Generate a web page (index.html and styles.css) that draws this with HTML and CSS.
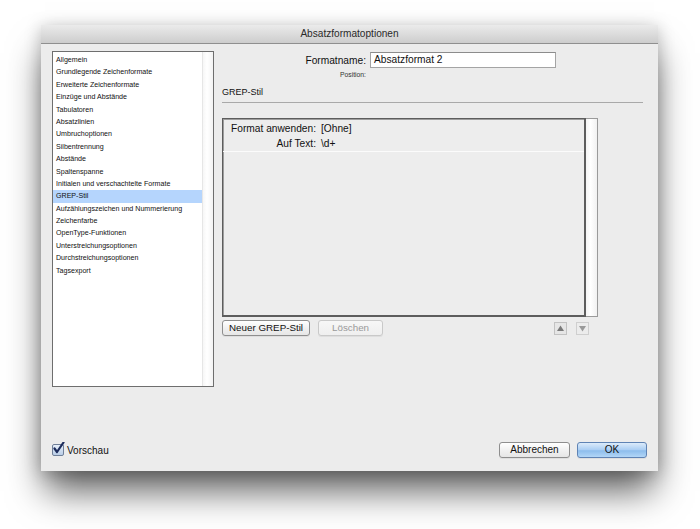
FILE: index.html
```html
<!DOCTYPE html>
<html lang="de">
<head>
<meta charset="utf-8">
<title>Absatzformatoptionen</title>
<link rel="stylesheet" href="styles.css">
</head>
<body>
<div class="window">
  <div class="titlebar">Absatzformatoptionen</div>
  <div class="content">
    <div class="main">
      <div class="listbox">
        <ul class="categories">
          <li>Allgemein</li>
          <li>Grundlegende Zeichenformate</li>
          <li>Erweiterte Zeichenformate</li>
          <li>Einzüge und Abstände</li>
          <li>Tabulatoren</li>
          <li>Absatzlinien</li>
          <li>Umbruchoptionen</li>
          <li>Silbentrennung</li>
          <li>Abstände</li>
          <li>Spaltenspanne</li>
          <li>Initialen und verschachtelte Formate</li>
          <li class="selected">GREP-Stil</li>
          <li>Aufzählungszeichen und Nummerierung</li>
          <li>Zeichenfarbe</li>
          <li>OpenType-Funktionen</li>
          <li>Unterstreichungsoptionen</li>
          <li>Durchstreichungsoptionen</li>
          <li>Tagsexport</li>
        </ul>
        <div class="list-scroll"></div>
      </div>

      <div class="panel">
        <div class="name-row">
          <label class="name-label">Formatname:</label>
          <div class="text-field">Absatzformat 2</div>
        </div>
        <div class="position-row">Position:</div>
        <div class="section-title">GREP-Stil</div>
        <div class="rule"></div>

        <div class="grep-box">
          <div class="grep-list">
            <div class="grep-item">
              <div class="grep-line"><span class="grep-key">Format anwenden:</span><span class="grep-val">[Ohne]</span></div>
              <div class="grep-line"><span class="grep-key">Auf Text:</span><span class="grep-val">\d+</span></div>
            </div>
          </div>
          <div class="grep-scroll"></div>
        </div>

        <div class="grep-actions">
          <button class="btn">Neuer GREP-Stil</button>
          <button class="btn disabled">Löschen</button>
          <div class="spacer"></div>
          <span class="arrow-btn up"><svg viewBox="0 0 11 11" width="11" height="11"><path d="M5.5 2.5 L9 8 L2 8 Z" fill="#7a7a7a"/></svg></span>
          <span class="arrow-btn down"><svg viewBox="0 0 11 11" width="11" height="11"><path d="M2 3 L9 3 L5.5 8.5 Z" fill="#9a9a9a"/></svg></span>
        </div>
      </div>
    </div>

    <div class="footer">
      <label class="check">
        <span class="checkbox"><svg viewBox="0 0 13 13" width="13" height="13"><path d="M2.5 6.5 L5 10 L11.5 0.5" fill="none" stroke="#1c2c5c" stroke-width="2.2" stroke-linecap="round" stroke-linejoin="round"/></svg></span>
        <span>Vorschau</span>
      </label>
      <div class="spacer"></div>
      <button class="btn dialog">Abbrechen</button>
      <button class="btn dialog default">OK</button>
    </div>
  </div>
</div>
</body>
</html>
```

FILE: styles.css
```css
html, body {
  margin: 0;
  padding: 0;
  background: #ffffff;
}

body {
  font-family: "Liberation Sans", Arial, sans-serif;
  font-size: 10.2px;
  color: #111;
  padding: 25px 0 0 41px;
  min-height: 529px;
  box-sizing: border-box;
  overflow: hidden;
}

.window {
  width: 617px;
  height: 446px;
  background: #ececec;
  box-shadow: 0 24px 34px -4px rgba(0, 0, 0, 0.62), 0 2px 16px rgba(0, 0, 0, 0.22);
  display: flex;
  flex-direction: column;
}

.titlebar {
  height: 18px;
  line-height: 18px;
  text-align: center;
  font-size: 10.1px;
  color: #2a2a2a;
  background: linear-gradient(#ebebeb, #cdcdcd);
  border-bottom: 1px solid #8f8f8f;
  flex: none;
}

.content {
  flex: 1;
  display: flex;
  flex-direction: column;
  padding: 7px 11px 13px 11px;
}

.main {
  display: flex;
  align-items: flex-start;
}

/* Category list */
.listbox {
  width: 160px;
  height: 334px;
  border: 1px solid #6e6e6e;
  background: #fff;
  display: flex;
  flex: none;
}

.categories {
  list-style: none;
  margin: 0;
  padding: 2px 0 0 0;
  flex: 1;
  font-size: 7.1px;
  color: #111;
}

.categories li {
  height: 12.4px;
  line-height: 12.4px;
  padding-left: 3px;
  white-space: nowrap;
}

.categories li.selected {
  background: #b5d5fd;
}

.list-scroll {
  width: 10px;
  border-left: 1px solid #e6e6e6;
  background: linear-gradient(90deg, #f6f6f6, #ffffff 40%, #f3f3f3);
}

/* Right panel */
.panel {
  margin-left: 8px;
  width: 421px;
  display: flex;
  flex-direction: column;
}

.name-row {
  display: flex;
  align-items: center;
  margin-top: 1px;
}

.name-label {
  width: 144px;
  text-align: right;
  margin-right: 4px;
}

.text-field {
  width: 181px;
  height: 14px;
  line-height: 14px;
  border: 1px solid #a4a4a4;
  border-top-color: #8c8c8c;
  background: #fff;
  padding-left: 3px;
}

.position-row {
  width: 144px;
  text-align: right;
  font-size: 6.8px;
  line-height: 8px;
  margin-top: 3px;
  color: #333;
}

.section-title {
  font-size: 9px;
  line-height: 12px;
  margin-top: 7px;
  color: #111;
}

.rule {
  height: 1px;
  background: #a9a9a9;
  margin-top: 4px;
}

/* GREP styles list */
.grep-box {
  margin-top: 15px;
  width: 376px;
  height: 199px;
  display: flex;
}

.grep-list {
  flex: 1;
  border: 1px solid #5d5d5d;
  border-right-width: 2px;
  border-bottom-width: 2px;
  box-shadow: inset 1px 1px 0 #9d9d9d;
  background: #ededed;
}

.grep-item {
  padding-top: 2px;
  border-bottom: 1px solid #fbfbfb;
}

.grep-line {
  display: flex;
  height: 15px;
  line-height: 15px;
}

.grep-key {
  width: 93px;
  text-align: right;
  flex: none;
}

.grep-val {
  margin-left: 5px;
}

.grep-scroll {
  width: 11px;
  border: 1px solid #9a9a9a;
  border-left: none;
  background: linear-gradient(90deg, #f4f4f4, #ffffff 40%, #f1f1f1);
}

.grep-actions {
  display: flex;
  align-items: center;
  margin-top: 3px;
  width: 367px;
}

.spacer {
  flex: 1;
}

.btn {
  font-family: "Liberation Sans", Arial, sans-serif;
  font-size: 9.8px;
  color: #111;
  height: 16px;
  padding: 0 6px;
  border: 1px solid #8e8e8e;
  border-radius: 3px;
  background: linear-gradient(#ffffff, #f1f1f1 50%, #e6e6e6);
  box-shadow: 0 1px 0 rgba(0, 0, 0, 0.06);
  margin: 0 8px 0 0;
  line-height: 14px;
}

.btn.disabled {
  color: #9a9a9a;
  border-color: #c9c9c9;
  width: 65px;
  background: linear-gradient(#f7f7f7, #efefef);
}

.arrow-btn {
  width: 11px;
  height: 11px;
  border: 1px solid #c2c2c2;
  background: #e6e6e6;
  display: flex;
  margin-left: 9px;
}

.arrow-btn.down {
  background: #ececec;
  border-color: #cfcfcf;
}

/* Footer */
.footer {
  margin-top: auto;
  display: flex;
  align-items: center;
}

.check {
  display: flex;
  align-items: center;
  font-size: 10px;
}

.checkbox {
  width: 10px;
  height: 10px;
  border: 1px solid #6f7f98;
  border-radius: 2px;
  background: linear-gradient(#e8f0fa, #b9cde6);
  position: relative;
  margin-right: 3px;
}

.checkbox svg {
  position: absolute;
  left: -1px;
  top: -3px;
}

.btn.dialog {
  width: 71px;
  height: 16px;
  padding: 0;
  margin: 0;
  font-size: 10px;
}

.btn.dialog.default {
  width: 70px;
  margin-left: 7px;
  border-color: #5f83b4;
  background: linear-gradient(#dcebfa, #a9cdf3 50%, #8dbdec 55%, #b2d6f7);
}
```
